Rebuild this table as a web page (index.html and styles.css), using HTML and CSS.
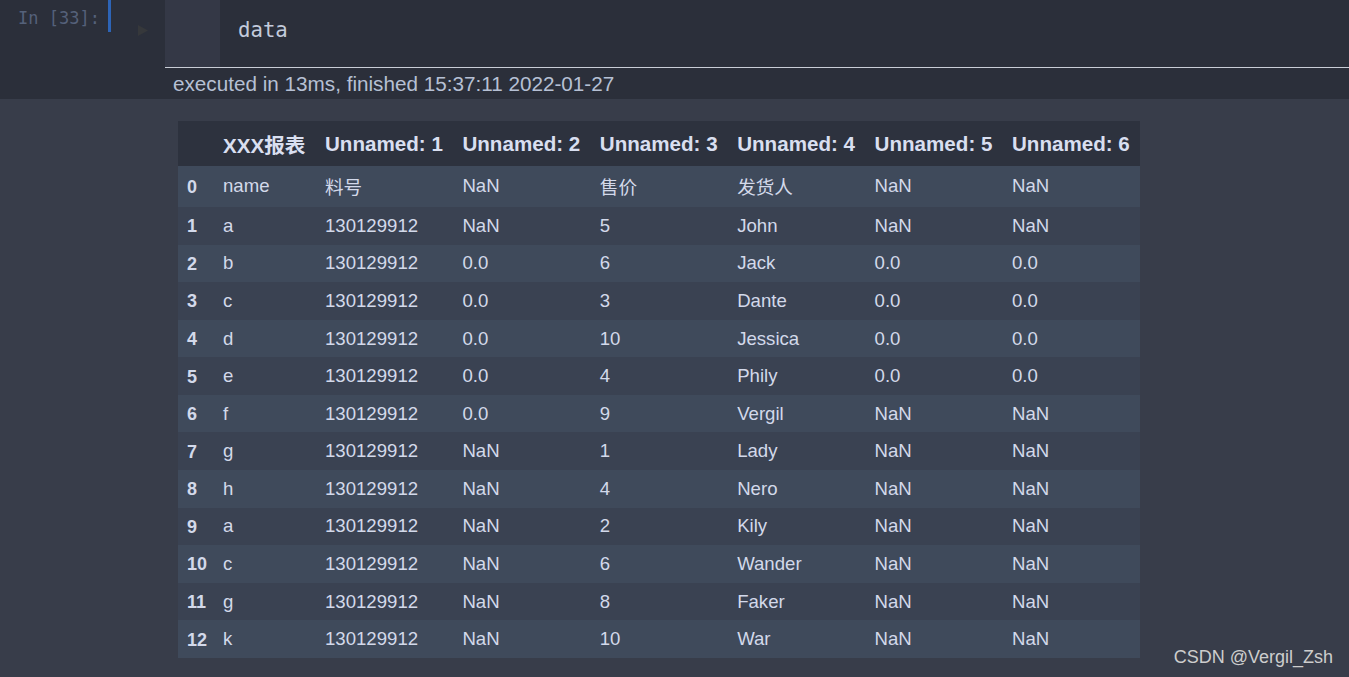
FILE: index.html
```html
<!DOCTYPE html>
<html>
<head>
<meta charset="utf-8">
<link rel="stylesheet" href="styles.css">
</head>
<body>
<div class="top">
  <div class="input">
    <div class="prompt-area">
      <div class="prompt">In [33]:</div>
      <div class="bar"></div>
      <svg class="run" width="10" height="11" viewBox="0 0 10 11"><polygon points="0,0 10,5.5 0,11" fill="#36383b"/></svg>
    </div>
    <div class="editor">
      <div class="gutter"></div>
      <div class="code">data</div>
    </div>
  </div>
  <div class="exec">executed in 13ms, finished 15:37:11 2022-01-27</div>
</div>
<div class="output">
  <table class="df">
    <colgroup>
      <col class="c-idx"><col class="c-1"><col class="c-n"><col class="c-n"><col class="c-n"><col class="c-n"><col class="c-n"><col class="c-n">
    </colgroup>
    <thead>
      <tr><th></th><th>XXX报表</th><th>Unnamed: 1</th><th>Unnamed: 2</th><th>Unnamed: 3</th><th>Unnamed: 4</th><th>Unnamed: 5</th><th>Unnamed: 6</th></tr>
    </thead>
    <tbody>
      <tr class="even first"><th>0</th><td>name</td><td>料号</td><td>NaN</td><td>售价</td><td>发货人</td><td>NaN</td><td>NaN</td></tr>
      <tr class="odd"><th>1</th><td>a</td><td>130129912</td><td>NaN</td><td>5</td><td>John</td><td>NaN</td><td>NaN</td></tr>
      <tr class="even"><th>2</th><td>b</td><td>130129912</td><td>0.0</td><td>6</td><td>Jack</td><td>0.0</td><td>0.0</td></tr>
      <tr class="odd"><th>3</th><td>c</td><td>130129912</td><td>0.0</td><td>3</td><td>Dante</td><td>0.0</td><td>0.0</td></tr>
      <tr class="even"><th>4</th><td>d</td><td>130129912</td><td>0.0</td><td>10</td><td>Jessica</td><td>0.0</td><td>0.0</td></tr>
      <tr class="odd"><th>5</th><td>e</td><td>130129912</td><td>0.0</td><td>4</td><td>Phily</td><td>0.0</td><td>0.0</td></tr>
      <tr class="even"><th>6</th><td>f</td><td>130129912</td><td>0.0</td><td>9</td><td>Vergil</td><td>NaN</td><td>NaN</td></tr>
      <tr class="odd"><th>7</th><td>g</td><td>130129912</td><td>NaN</td><td>1</td><td>Lady</td><td>NaN</td><td>NaN</td></tr>
      <tr class="even"><th>8</th><td>h</td><td>130129912</td><td>NaN</td><td>4</td><td>Nero</td><td>NaN</td><td>NaN</td></tr>
      <tr class="odd"><th>9</th><td>a</td><td>130129912</td><td>NaN</td><td>2</td><td>Kily</td><td>NaN</td><td>NaN</td></tr>
      <tr class="even"><th>10</th><td>c</td><td>130129912</td><td>NaN</td><td>6</td><td>Wander</td><td>NaN</td><td>NaN</td></tr>
      <tr class="odd"><th>11</th><td>g</td><td>130129912</td><td>NaN</td><td>8</td><td>Faker</td><td>NaN</td><td>NaN</td></tr>
      <tr class="even"><th>12</th><td>k</td><td>130129912</td><td>NaN</td><td>10</td><td>War</td><td>NaN</td><td>NaN</td></tr>
    </tbody>
  </table>
</div>
<div class="watermark">CSDN @Vergil_Zsh</div>
</body>
</html>
```
FILE: styles.css
```css
html, body {
  margin: 0;
  padding: 0;
}
body {
  background: #383d4a;
  width: 1349px;
  height: 677px;
  overflow: hidden;
  position: relative;
  font-family: "Liberation Sans", Arial, "Noto Sans CJK SC", sans-serif;
}
.top {
  background: #2b2f3a;
  height: 99px;
}
.input {
  display: flex;
  height: 68px;
}
.prompt-area {
  width: 165px;
  flex: none;
  display: flex;
  align-items: flex-start;
}
.prompt {
  flex: none;
  font-family: "DejaVu Sans Mono", monospace;
  font-size: 17px;
  line-height: 20px;
  padding-top: 8px;
  padding-left: 18px;
  width: 90px;
  color: #55617a;
}
.bar {
  flex: none;
  width: 3px;
  height: 32px;
  background: #2d64b6;
}
.run {
  flex: none;
  margin-left: 27px;
  margin-top: 25px;
}
.editor {
  flex: 1;
  display: flex;
  box-sizing: border-box;
  border-bottom: 1px solid #c9cdd6;
}
.gutter {
  width: 55px;
  background: #343846;
}
.code {
  flex: 1;
  padding-left: 18px;
  padding-top: 17px;
  font-family: "DejaVu Sans Mono", monospace;
  font-size: 20.7px;
  line-height: 26px;
  color: #c3cbdc;
}
.exec {
  height: 31px;
  line-height: 31px;
  padding-left: 173px;
  font-size: 20.7px;
  color: #b6c0d4;
}
.output {
  padding-top: 22px;
  padding-left: 178px;
}
.df {
  border-collapse: collapse;
  border-spacing: 0;
  table-layout: fixed;
  width: 962px;
  color: #d3d9ea;
}
.c-idx { width: 36px; }
.c-1 { width: 102px; }
.c-n { width: 137.4px; }
.df th, .df td {
  padding: 0 0 0 9px;
  text-align: left;
  vertical-align: middle;
  white-space: nowrap;
}
.df thead tr {
  height: 45px;
  background: #2d323e;
}
.df thead th {
  font-size: 20.6px;
  font-weight: bold;
  color: #d9dff0;
  padding-top: 1px;
}
.df tbody th {
  font-size: 18px;
  font-weight: bold;
  padding-top: 2px;
}
.df tbody td {
  font-size: 18.6px;
}
.df tbody tr {
  height: 37.58px;
}
.df tbody tr.first {
  height: 41px;
}
.df tbody tr.first td {
  padding-bottom: 2px;
}
.df tbody tr.even {
  background: #3f4a5b;
}
.df tbody tr.odd {
  background: #3a4252;
}
.watermark {
  position: absolute;
  right: 16px;
  top: 646px;
  font-size: 18px;
  line-height: 22px;
  color: #cdcdcd;
}
```
